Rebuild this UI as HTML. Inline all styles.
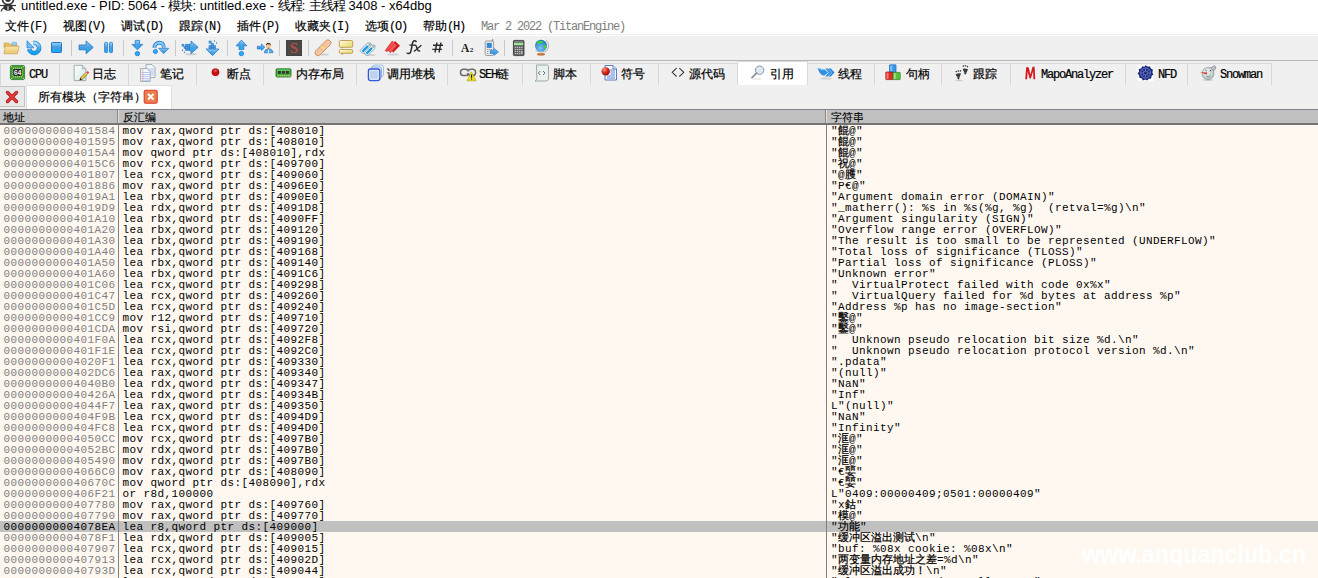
<!DOCTYPE html>
<html><head><meta charset="utf-8">
<style>
*{margin:0;padding:0;box-sizing:border-box}
html,body{width:1318px;height:578px;overflow:hidden}
body{position:relative;background:#fff;font-family:"Liberation Sans",sans-serif;color:#000}
.a{position:absolute}
svg{position:absolute;overflow:visible}
/* title */
#title b{font-weight:normal;display:inline-block;width:12px;font-size:12.5px;text-align:center}
#title{left:21px;top:-2px;font-size:13px;line-height:16px;white-space:nowrap;color:#000}
/* menu */
.mi{position:absolute;top:20px;height:14px;line-height:14px;font-family:"Liberation Mono",monospace;font-size:12px;white-space:nowrap}
.mi b{font-weight:normal;display:inline-block;width:12px;text-align:center;-webkit-text-stroke:0.2px #000}
.mi u{text-decoration:none;letter-spacing:-1.2px;-webkit-text-stroke:0.15px #000}
#ver{position:absolute;left:481px;top:20px;line-height:14px;font-family:"Liberation Mono",monospace;font-size:12px;letter-spacing:-1.2px;color:#808080;white-space:nowrap}
/* toolbar */
#tb{left:0;top:36px;width:1318px;height:24px;background:#f0f0f0}
#tbl{left:0;top:60px;width:1318px;height:1px;background:#b8b8b8}
.sep{position:absolute;top:40px;width:1px;height:16px;background:#c9c9c9}
/* tabs */
#tabbar{left:0;top:61px;width:1318px;height:48px;background:#f0f0f0}
.tab{position:absolute;top:63px;height:22px;border:1px solid #d9d9d9;border-right:none;border-bottom:none;background:#f0f0f0}
.tab.act{top:61px;height:24px;background:#fff;border-right:1px solid #d9d9d9;z-index:2}
.tt{position:absolute;top:68px;height:14px;line-height:14px;font-family:"Liberation Mono",monospace;font-size:12px;white-space:nowrap;z-index:3}
.tt b{font-weight:normal;display:inline-block;width:12px;text-align:center;-webkit-text-stroke:0.2px #000}
.tt u{text-decoration:none;letter-spacing:-1.2px;-webkit-text-stroke:0.2px #000}
/* table */
#hdr{left:0;top:109px;width:1318px;height:16px;background:#c0c0c0;border-top:1px solid #7f8590;border-bottom:2px solid #747474}
.hs{position:absolute;top:110px;width:2px;height:13px;background:#8a8a8a;border-right:1px solid #e0e0e0}
.ht{position:absolute;top:112px;line-height:12px;font-family:"Liberation Mono",monospace;font-size:11px;white-space:nowrap}
.ht b{font-weight:normal;display:inline-block;width:11px;text-align:center;-webkit-text-stroke:0.15px #000}
#data{left:0;top:125px;width:1318px;height:453px;background:#fff8f0}
.vs{position:absolute;top:125px;width:1px;height:453px;background:#808080}
.r{position:absolute;left:0;width:1318px;height:11px;line-height:11px;font-family:"Liberation Mono",monospace;font-size:11px;letter-spacing:0.4px;white-space:pre}
.r span{position:absolute;top:1px}
.r .ad{left:3.5px;color:#808080}
.r .ds{left:122.5px}
.r .st{left:831px}
.r.sel{background:#c0c0c0}
.r.sel .ad{color:#000}
.cj{font-style:normal;display:inline-block;width:11px;font-size:10.5px;letter-spacing:0;text-align:center;vertical-align:top;line-height:11px;-webkit-text-stroke:0.25px #000}
#wm{left:1082px;top:540px;transform:scaleX(0.93);transform-origin:left top;font-size:25px;line-height:28px;font-weight:bold;font-family:"Liberation Sans",sans-serif;color:#fff;white-space:nowrap;z-index:5}
</style></head><body>

<!-- title bar -->
<svg style="left:0;top:0" width="17" height="13" viewBox="0 0 17 13">
  <circle cx="8" cy="-1" r="5.6" fill="none" stroke="#333" stroke-width="1.6"/>
  <circle cx="8" cy="-1" r="3" fill="#333"/>
  <ellipse cx="8" cy="7.3" rx="4.6" ry="3.6" fill="#333"/>
  <rect x="7" y="5" width="2" height="5.5" fill="#999"/>
  <line x1="0" y1="5.5" x2="16" y2="5.5" stroke="#333" stroke-width="1.2"/>
  <path d="M4.5 8 Q1.5 8.5 1.2 11.5 M11.5 8 Q14.5 8.5 14.8 11.5" fill="none" stroke="#333" stroke-width="1.2"/>
</svg>
<div id="title" class="a">untitled.exe - PID: 5064 - <b>模</b><b>块</b>: untitled.exe - <b>线</b><b>程</b>: <b>主</b><b>线</b><b>程</b> 3408 - x64dbg</div>

<!-- menu -->
<div class="mi" style="left:5px"><b>文</b><b>件</b><u>(F)</u></div>
<div class="mi" style="left:63px"><b>视</b><b>图</b><u>(V)</u></div>
<div class="mi" style="left:121px"><b>调</b><b>试</b><u>(D)</u></div>
<div class="mi" style="left:179px"><b>跟</b><b>踪</b><u>(N)</u></div>
<div class="mi" style="left:237px"><b>插</b><b>件</b><u>(P)</u></div>
<div class="mi" style="left:295px"><b>收</b><b>藏</b><b>夹</b><u>(I)</u></div>
<div class="mi" style="left:365px"><b>选</b><b>项</b><u>(O)</u></div>
<div class="mi" style="left:423px"><b>帮</b><b>助</b><u>(H)</u></div>
<div id="ver">Mar 2 2022 (TitanEngine)</div>

<!-- toolbar -->
<div class="a" style="left:0;top:34px;width:1318px;height:1px;background:#f0f0f0"></div>
<div id="tb" class="a"></div>
<div id="tbl" class="a"></div>
<!-- folder -->
<svg style="left:3px;top:40px" width="17" height="16" viewBox="0 0 17 16">
  <defs><linearGradient id="gf" x1="0" y1="0" x2="0" y2="1"><stop offset="0" stop-color="#fbe7a6"/><stop offset="1" stop-color="#e9c66e"/></linearGradient></defs>
  <path d="M1 3 h4.5 l1.5 1.3 h7 v3 h-13z" fill="#e4bf68" stroke="#c29a4a" stroke-width="0.6"/>
  <path d="M9 2.2 h4.5 v3 h-4.5z" fill="#8fd0ee" stroke="#5aa8d0" stroke-width="0.4"/>
  <path d="M2.2 6.2 h14 l-1.8 7.6 h-13.4 z" fill="url(#gf)" stroke="#c29a4a" stroke-width="0.6"/>
</svg>
<!-- restart -->
<svg style="left:26px;top:40px" width="16" height="16" viewBox="0 0 16 16">
  <defs><linearGradient id="gr" x1="0" y1="0" x2="0" y2="1"><stop offset="0" stop-color="#a6e0ff"/><stop offset="0.5" stop-color="#4aa8ea"/><stop offset="1" stop-color="#0aa2f5"/></linearGradient></defs>
  <path d="M3.2 9 A5 5 0 1 0 7.2 3.1" fill="none" stroke="#2c86d4" stroke-width="4.6"/>
  <path d="M3.2 9 A5 5 0 1 0 7.2 3.1" fill="none" stroke="url(#gr)" stroke-width="3"/>
  <path d="M1 0.8 L1 7.8 L8 7.8z" fill="#6cc0f4" stroke="#2c86d4" stroke-width="0.8" stroke-linejoin="round"/>
</svg>
<!-- stop -->
<svg style="left:51px;top:42px" width="11" height="11" viewBox="0 0 11 11">
  <defs><linearGradient id="gs" x1="0" y1="0" x2="0" y2="1"><stop offset="0" stop-color="#94dcff"/><stop offset="0.45" stop-color="#4a9ad8"/><stop offset="1" stop-color="#0cb0ff"/></linearGradient></defs>
  <rect x="0.5" y="0.5" width="10" height="10" rx="0.8" fill="url(#gs)" stroke="#2a6fc0" stroke-width="1"/>
</svg>
<!-- run -->
<svg style="left:78px;top:40px" width="16" height="15" viewBox="0 0 16 15">
  <defs><linearGradient id="ga" x1="0" y1="0" x2="0" y2="1"><stop offset="0" stop-color="#8fd6ff"/><stop offset="0.5" stop-color="#4a9ee0"/><stop offset="1" stop-color="#14b0ff"/></linearGradient></defs>
  <path d="M1.1 5 h7 v-4 l7.1 6.4 l-7.1 6.3 v-3.9 h-7z" fill="url(#ga)" stroke="#2a78c8" stroke-width="0.9" stroke-linejoin="round"/>
</svg>
<!-- pause -->
<svg style="left:102px;top:40px" width="14" height="16" viewBox="0 0 14 16">
  <rect x="2.6" y="2.4" width="3" height="10.2" rx="0.8" fill="url(#ga)" stroke="#2a78c8" stroke-width="0.8"/>
  <rect x="7.5" y="2.4" width="3" height="10.2" rx="0.8" fill="url(#ga)" stroke="#2a78c8" stroke-width="0.8"/>
</svg>
<!-- step into -->
<svg style="left:130px;top:40px" width="16" height="17" viewBox="0 0 16 17">
  <path d="M5.3 0.4 h4.3 v4 h3.2 l-5.4 5.4 l-5.4 -5.4 h3.3z" fill="url(#ga)" stroke="#2a78c8" stroke-width="0.8" stroke-linejoin="round"/>
  <circle cx="7.4" cy="13.6" r="2.2" fill="#1eb0ff" stroke="#2a78c8" stroke-width="0.8"/>
</svg>
<!-- step over -->
<svg style="left:152px;top:40px" width="18" height="16" viewBox="0 0 18 16">
  <path d="M2.3 8 Q2.8 2.8 7.5 2.6 Q11.2 2.6 12 7.5" fill="none" stroke="#2a78c8" stroke-width="3.8"/>
  <path d="M2.3 8 Q2.8 2.8 7.5 2.6 Q11.2 2.6 12 7.5" fill="none" stroke="#7cc8f6" stroke-width="2.2"/>
  <path d="M6.6 8.3 h10.2 l-5.1 5.3z" fill="url(#ga)" stroke="#2a78c8" stroke-width="0.8" stroke-linejoin="round"/>
  <circle cx="3.4" cy="11.5" r="2.1" fill="#1eb0ff" stroke="#2a78c8" stroke-width="0.8"/>
</svg>
<!-- animate into -->
<svg style="left:181px;top:40px" width="18" height="16" viewBox="0 0 18 16">
  <ellipse cx="10" cy="14.3" rx="6" ry="1" fill="#888" opacity="0.35"/>
  <g fill="#4a9ee0" stroke="#2a78c8" stroke-width="0.5">
    <rect x="1" y="4.2" width="2" height="2"/><rect x="4.5" y="4.2" width="2" height="2"/><rect x="6.7" y="4.2" width="2" height="2"/>
    <rect x="3" y="6.4" width="2" height="2"/><rect x="4.7" y="6.4" width="2" height="2"/><rect x="6.7" y="6.4" width="2" height="2"/>
    <rect x="4.5" y="8.6" width="2" height="2"/><rect x="6.7" y="8.6" width="2" height="2"/>
  </g>
  <circle cx="1.5" cy="10.2" r="0.7" fill="#2a78c8"/><circle cx="3.5" cy="12.3" r="0.7" fill="#2a78c8"/>
  <path d="M8.5 4.3 h1.5 v-3.3 l7.1 6.3 l-7.1 6.3 v-3 h-1.5z" fill="url(#ga)" stroke="#2a78c8" stroke-width="0.8" stroke-linejoin="round"/>
</svg>
<!-- animate over -->
<svg style="left:205px;top:40px" width="16" height="17" viewBox="0 0 16 17">
  <g fill="#4a9ee0" stroke="#2a78c8" stroke-width="0.5">
    <rect x="4" y="1" width="2.2" height="2.2"/><rect x="6.2" y="3.2" width="2.2" height="2.2"/>
    <rect x="4" y="5.4" width="2.2" height="2.2"/><rect x="6.2" y="5.4" width="2.2" height="2.2"/><rect x="8.4" y="5.4" width="2.2" height="2.2"/>
    <rect x="4" y="7.4" width="2.2" height="2"/><rect x="6.2" y="7.4" width="2.2" height="2"/><rect x="8.4" y="7.4" width="2.2" height="2"/>
  </g>
  <circle cx="9.5" cy="1" r="0.7" fill="#2a78c8"/><circle cx="11.5" cy="3" r="0.7" fill="#2a78c8"/>
  <path d="M4 9 h-3 l6.6 6.6 l6.4 -6.6 h-3.4z" fill="url(#ga)" stroke="#2a78c8" stroke-width="0.8" stroke-linejoin="round"/>
</svg>
<!-- exec till return -->
<svg style="left:234px;top:40px" width="16" height="17" viewBox="0 0 16 17">
  <path d="M5.1 9.6 h4.7 v-3.8 h3.1 l-5.5 -5.7 l-5.3 5.7 h3z" fill="url(#ga)" stroke="#2a78c8" stroke-width="0.8" stroke-linejoin="round"/>
  <circle cx="7.4" cy="13.6" r="2.2" fill="#1eb0ff" stroke="#2a78c8" stroke-width="0.8"/>
</svg>
<!-- run to user code -->
<svg style="left:257px;top:40px" width="17" height="16" viewBox="0 0 17 16">
  <path d="M0.3 6.2 h4.2 v-2.2 l3.4 3.3 l-3.4 3.2 v-1.5 h-4.2z" fill="url(#ga)" stroke="#2a78c8" stroke-width="0.7" stroke-linejoin="round"/>
  <path d="M7.3 12.8 Q7.5 9 11.5 8.8 Q15.8 9 16 12.8z" fill="#5aaae8" stroke="#2a78c8" stroke-width="0.7"/>
  <rect x="11" y="9" width="1" height="3.8" fill="#fff"/>
  <circle cx="11.4" cy="5.8" r="2.5" fill="#f2c290"/>
  <path d="M8.8 5.6 Q9 2.8 11.4 2.8 Q13.8 2.8 14 5.6 Q13 4 11.4 4.2 Q9.8 4 8.8 5.6z" fill="#4a3426"/>
  <rect x="10.7" y="7.8" width="1.4" height="1.8" fill="#b86a2a"/>
</svg>
<!-- S -->
<svg style="left:286px;top:40px" width="16" height="16" viewBox="0 0 16 16">
  <rect x="0.4" y="0.4" width="15.2" height="15.2" fill="#4a4745" stroke="#333" stroke-width="0.8"/>
  <text x="8" y="13.4" font-family="Liberation Serif" font-weight="bold" font-size="15" fill="#b04c4c" text-anchor="middle">S</text>
</svg>
<!-- bandage -->
<svg style="left:314px;top:40px" width="17" height="16" viewBox="0 0 17 16">
  <ellipse cx="10" cy="14.5" rx="5" ry="1" fill="#888" opacity="0.3"/>
  <g transform="rotate(-45 9 7.8)"><rect x="-1" y="4.8" width="20" height="6" rx="3" fill="#f2c4a0" stroke="#c8885a" stroke-width="0.8"/><rect x="7" y="5.5" width="4" height="4.6" fill="#f7d890" stroke="#e09a70" stroke-width="0.5"/></g>
</svg>
<!-- comments -->
<svg style="left:338px;top:40px" width="16" height="16" viewBox="0 0 16 16">
  <defs><linearGradient id="gc" x1="0" y1="0" x2="1" y2="1"><stop offset="0" stop-color="#fffdf0"/><stop offset="0.6" stop-color="#ece68e"/><stop offset="1" stop-color="#e4dc78"/></linearGradient></defs>
  <rect x="1.3" y="0.5" width="13.4" height="6.8" rx="1.2" fill="url(#gc)" stroke="#bf9450" stroke-width="0.9"/>
  <path d="M3.8 7.2 v1.8 l1.8 -1.8z" fill="#bf9450"/>
  <rect x="1.3" y="9.5" width="13.4" height="3.8" rx="1.2" fill="url(#gc)" stroke="#bf9450" stroke-width="0.9"/>
  <path d="M3.8 13.2 v2.4 l1.8 -2.4z" fill="#bf9450"/>
</svg>
<!-- labels -->
<svg style="left:361px;top:40px" width="17" height="16" viewBox="0 0 17 16">
  <ellipse cx="9" cy="15" rx="6" ry="0.9" fill="#888" opacity="0.3"/>
  <g transform="rotate(-45 6 7)"><path d="M-1.5 4.6 h10.5 l2.5 2.4 l-2.5 2.4 h-10.5z" fill="#fff" stroke="#7d9aa0" stroke-width="0.8"/><rect x="-0.5" y="5.8" width="8" height="2.4" fill="#1e9be6"/><circle cx="9" cy="7" r="0.9" fill="#7d9aa0"/></g>
  <g transform="rotate(-45 10 9)"><path d="M2.5 6.6 h10.5 l2.5 2.4 l-2.5 2.4 h-10.5z" fill="#fff" stroke="#7d9aa0" stroke-width="0.8"/><rect x="3.5" y="7.8" width="8" height="2.4" fill="#1e9be6"/><circle cx="13" cy="9" r="0.9" fill="#7d9aa0"/></g>
</svg>
<!-- bookmarks -->
<svg style="left:384px;top:40px" width="17" height="16" viewBox="0 0 17 16">
  <ellipse cx="9" cy="14.5" rx="6" ry="0.9" fill="#888" opacity="0.3"/>
  <path d="M11 1 L16 5.8 L9 12.8 L7.8 10.5 L5 11.5 L4 10.5z" fill="#d81c1c"/>
  <path d="M8.2 1 L13.2 5.8 L6.2 12.8 L5 10.5 L2.2 11.5 L1.2 10.5z" fill="#f04a4a" stroke="#c81818" stroke-width="0.5"/>
  <path d="M9 2.8 L11.5 5.3 L5.5 11.2" stroke="#ff8a8a" stroke-width="0.6" fill="none"/>
</svg>
<!-- fx -->
<svg style="left:404px;top:38px" width="20" height="18" viewBox="0 0 20 18">
  <path d="M12.3 4.2 Q12 2.7 10.6 2.8 Q8.9 2.9 8.4 5.6 L7 12.8 Q6.4 15.6 4.2 15.6 Q3 15.5 3.1 14.6" stroke="#2a2a2a" stroke-width="1.5" fill="none"/>
  <path d="M5.3 7.1 H10.2" stroke="#2a2a2a" stroke-width="1.2"/>
  <path d="M9.8 7.4 Q11.6 6.4 12.4 8.6 L13.6 11.8 Q14.3 13.6 16.2 12.6" stroke="#2a2a2a" stroke-width="1.4" fill="none"/>
  <path d="M17.4 7.2 L10 13.4" stroke="#2a2a2a" stroke-width="1.3" fill="none"/>
</svg>
<!-- # -->
<svg style="left:432px;top:42px" width="12" height="11" viewBox="0 0 12 11">
  <path d="M5 0.5 L3 10.5 M9 0.5 L7 10.5 M1 3.3 H11 M0.3 7.4 H10" stroke="#2a2a2a" stroke-width="1.4"/>
</svg>
<!-- A2 -->
<div class="a" style="left:461px;top:42px;font-family:'Liberation Serif',serif;font-weight:bold;font-size:11.5px;line-height:12px;color:#222">A<span style="font-size:7px;margin-left:0.5px">2</span></div>
<!-- phone -->
<svg style="left:484px;top:39px" width="15" height="17" viewBox="0 0 15 17">
  <line x1="8.6" y1="0.3" x2="8.6" y2="3" stroke="#555" stroke-width="0.9"/>
  <rect x="1.2" y="2" width="8.5" height="14.5" rx="1.2" fill="#e8e8e8" stroke="#8a8a8a" stroke-width="0.8"/>
  <rect x="2.8" y="3.9" width="5" height="5" fill="#2f8ad8"/>
  <g fill="#777"><rect x="3.3" y="10" width="0.9" height="0.9"/><rect x="5.2" y="10" width="0.9" height="0.9"/><rect x="7.2" y="10" width="0.9" height="0.9"/>
  <rect x="3.3" y="12" width="0.9" height="0.9"/><rect x="3.3" y="14" width="0.9" height="0.9"/></g>
  <path d="M6.3 11.3 h3.8 v-1.8 l4.3 3.4 l-4.3 3.4 v-1.8 h-3.8z" fill="url(#ga)" stroke="#2a78c8" stroke-width="0.7" stroke-linejoin="round"/>
</svg>
<!-- calculator -->
<svg style="left:513px;top:40px" width="12" height="16" viewBox="0 0 12 16">
  <rect x="0.4" y="0.4" width="10.6" height="15.2" rx="0.8" fill="#5a5a5a" stroke="#333" stroke-width="0.8"/>
  <rect x="1.2" y="1.2" width="9" height="1" fill="#8a8a8a"/>
  <rect x="1" y="2.8" width="9.2" height="2.4" fill="#9ee69a"/>
  <g fill="#c8c8c8"><rect x="1.8" y="6.7" width="1.4" height="1.2"/><rect x="3.9" y="6.7" width="1.4" height="1.2"/><rect x="6" y="6.7" width="1.4" height="1.2"/><rect x="8.1" y="6.7" width="1.4" height="1.2"/>
  <rect x="1.8" y="8.8" width="1.4" height="1.2"/><rect x="3.9" y="8.8" width="1.4" height="1.2"/><rect x="6" y="8.8" width="1.4" height="1.2"/><rect x="8.1" y="8.8" width="1.4" height="1.2"/>
  <rect x="1.8" y="10.9" width="1.4" height="1.2"/><rect x="3.9" y="10.9" width="1.4" height="1.2"/><rect x="6" y="10.9" width="1.4" height="1.2"/><rect x="8.1" y="10.9" width="1.4" height="3.3"/>
  <rect x="1.8" y="13" width="1.4" height="1.2"/><rect x="3.9" y="13" width="1.4" height="1.2"/><rect x="6" y="13" width="1.4" height="1.2"/></g>
</svg>
<!-- globe -->
<svg style="left:534px;top:39px" width="16" height="17" viewBox="0 0 16 17">
  <defs><radialGradient id="gg" cx="0.45" cy="0.7" r="0.7"><stop offset="0" stop-color="#7cc4f8"/><stop offset="1" stop-color="#1a6ec8"/></radialGradient></defs>
  <path d="M12.4 1.3 Q16.5 6 13 11.5 Q9 14.5 1.5 11.5" fill="none" stroke="#a8a8a8" stroke-width="0.9"/>
  <circle cx="7" cy="6.7" r="6" fill="url(#gg)"/>
  <path d="M3 2.8 Q6.5 1 9.5 2.5 Q8.5 4.5 6.8 4.3 Q5.5 5.5 4.2 4.8 Q2.5 5 3 2.8z M9.3 5.5 Q12.5 5 12.2 8.5 Q11 10.5 9.6 9.2 Q10.2 7.5 9.3 5.5z M1.5 6 Q3 6.5 2.8 8 Q1.6 8 1.5 6z" fill="#3ed23a"/>
  <ellipse cx="7" cy="15.2" rx="4" ry="1.3" fill="#b8652a"/>
  <ellipse cx="7" cy="14.8" rx="3" ry="0.6" fill="#e09a5a"/>
</svg>
<div class="sep" style="left:71px"></div>
<div class="sep" style="left:123px"></div>
<div class="sep" style="left:175px"></div>
<div class="sep" style="left:227px"></div>
<div class="sep" style="left:279px"></div>
<div class="sep" style="left:308px"></div>
<div class="sep" style="left:452px"></div>
<div class="sep" style="left:504px"></div>


<!-- tabs -->
<div id="tabbar" class="a"></div>
<div class="tab" style="left:0px;width:59px"></div>
<div class="tab" style="left:59px;width:69px"></div>
<div class="tab" style="left:128px;width:68px"></div>
<div class="tab" style="left:196px;width:67px"></div>
<div class="tab" style="left:263px;width:93px"></div>
<div class="tab" style="left:356px;width:91px"></div>
<div class="tab" style="left:447px;width:75px"></div>
<div class="tab" style="left:522px;width:68px"></div>
<div class="tab" style="left:590px;width:68px"></div>
<div class="tab" style="left:658px;width:79px"></div>
<div class="tab act" style="left:737px;width:71px"></div>
<div class="tab" style="left:807px;width:67px"></div>
<div class="tab" style="left:874px;width:67px"></div>
<div class="tab" style="left:941px;width:69px"></div>
<div class="tab" style="left:1010px;width:115px"></div>
<div class="tab" style="left:1125px;width:62px"></div>
<div class="tab" style="left:1187px;width:85px;border-right:1px solid #d9d9d9"></div>

<!-- CPU chip -->
<svg style="left:10px;top:65px;z-index:3" width="15" height="15" viewBox="0 0 15 15">
  <rect x="0.4" y="0.4" width="14.2" height="14.2" rx="1.6" fill="#3c9e3a" stroke="#1e6a1e" stroke-width="0.7"/>
  <g fill="#efd77a"><circle cx="1.6" cy="1.6" r="0.6"/><circle cx="13.4" cy="1.6" r="0.6"/><circle cx="1.6" cy="13.4" r="0.6"/><circle cx="13.4" cy="13.4" r="0.6"/></g>
  <g stroke="#efd77a" stroke-width="0.7">
    <path d="M3.7 2.4 v1.8 M5.7 2.4 v1.8 M7.5 2.4 v1.8 M9.3 2.4 v1.8 M11.3 2.4 v1.8"/>
    <path d="M3.7 10.8 v1.8 M5.7 10.8 v1.8 M7.5 10.8 v1.8 M9.3 10.8 v1.8 M11.3 10.8 v1.8"/>
    <path d="M2.3 5 h1.8 M2.3 6.8 h1.8 M2.3 8.6 h1.8 M2.3 10.3 h1.8"/>
    <path d="M10.9 5 h1.8 M10.9 6.8 h1.8 M10.9 8.6 h1.8 M10.9 10.3 h1.8"/>
  </g>
  <rect x="3.2" y="4.1" width="8.6" height="6.6" rx="0.8" fill="#262626"/>
  <text x="7.5" y="9.9" font-family="Liberation Mono" font-weight="bold" font-size="6.6" fill="#f4f4f4" text-anchor="middle" letter-spacing="-0.3">64</text>
</svg>
<div class="tt" style="left:29px"><u>CPU</u></div>
<!-- log page w/ pencil -->
<svg style="left:72px;top:64px;z-index:3" width="18" height="18" viewBox="0 0 18 18">
  <defs><linearGradient id="gpg" x1="0" y1="0" x2="1" y2="1"><stop offset="0" stop-color="#ffffff"/><stop offset="1" stop-color="#d4e4e4"/></linearGradient></defs>
  <path d="M2.1 1.3 h8.3 l3.5 3.5 v11.8 h-11.8z" fill="url(#gpg)" stroke="#94a8a8" stroke-width="0.9"/>
  <path d="M10.4 1.3 v3.5 h3.5" fill="#c8d8d8" stroke="#94a8a8" stroke-width="0.7"/>
  <path d="M9.2 14.8 L14.6 9.4" stroke="#6a5a1a" stroke-width="2.8" stroke-linecap="butt"/>
  <path d="M9.2 14.8 L14.6 9.4" stroke="#f0d040" stroke-width="1.8" stroke-linecap="butt"/>
  <path d="M7.4 16.6 L8.2 13.8 L10.2 15.8z" fill="#222"/>
  <path d="M14.2 8.6 L15.8 7 L17.2 8.4 L15.6 10z" fill="#e83a3a"/>
  <path d="M13.8 9 L15.2 10.4" stroke="#ddd" stroke-width="0.8"/>
</svg>
<div class="tt" style="left:92px"><b>日</b><b>志</b></div>
<!-- notes -->
<svg style="left:140px;top:64px;z-index:3" width="16" height="18" viewBox="0 0 16 18">
  <path d="M6 0.6 h6 l3 3 v10 h-9z" fill="#f4f6fb" stroke="#8e9aa6" stroke-width="0.8"/>
  <g stroke="#9fb2e6" stroke-width="0.7"><line x1="7" y1="5" x2="14" y2="5"/><line x1="7" y1="7" x2="14" y2="7"/><line x1="7" y1="9" x2="14" y2="9"/><line x1="7" y1="11" x2="14" y2="11"/></g>
  <path d="M0.6 4.6 h6.5 l3 3 v9.8 h-9.5z" fill="#f8f9fd" stroke="#8e9aa6" stroke-width="0.8"/>
  <g stroke="#9fb2e6" stroke-width="0.7"><line x1="1.5" y1="8.5" x2="9.5" y2="8.5"/><line x1="1.5" y1="10.5" x2="9.5" y2="10.5"/><line x1="1.5" y1="12.5" x2="9.5" y2="12.5"/><line x1="1.5" y1="14.5" x2="9.5" y2="14.5"/><line x1="1.5" y1="16.3" x2="9.5" y2="16.3"/></g>
  <line x1="2.8" y1="5.2" x2="2.8" y2="17" stroke="#e49a9a" stroke-width="0.7"/>
</svg>
<div class="tt" style="left:160px"><b>笔</b><b>记</b></div>
<!-- breakpoint dot -->
<svg style="left:210px;top:66px;z-index:3" width="11" height="11" viewBox="0 0 11 11">
  <defs><radialGradient id="rd" cx="0.5" cy="0.3" r="0.7"><stop offset="0" stop-color="#f06060"/><stop offset="0.5" stop-color="#b80c0c"/><stop offset="1" stop-color="#e01414"/></radialGradient></defs>
  <circle cx="5.5" cy="6.2" r="3.7" fill="url(#rd)" stroke="#a01010" stroke-width="0.4"/>
</svg>
<div class="tt" style="left:227px"><b>断</b><b>点</b></div>
<!-- memory map -->
<svg style="left:275px;top:68px;z-index:3" width="17" height="10" viewBox="0 0 17 10">
  <rect x="1" y="0.8" width="15" height="8.2" rx="1" fill="#3eac3a" stroke="#1d6e1d" stroke-width="0.8"/>
  <rect x="2" y="1.6" width="13" height="1" fill="#7ad27a"/>
  <g fill="#3a2c3a"><rect x="3.1" y="3" width="2.7" height="2.8"/><rect x="7.1" y="3" width="2.7" height="2.8"/><rect x="11.1" y="3" width="2.7" height="2.8"/></g>
  <g fill="#ecd27a"><rect x="2.7" y="6.9" width="1" height="1.6"/><rect x="4.7" y="6.9" width="1" height="1.6"/><rect x="6.7" y="6.9" width="1" height="1.6"/><rect x="8.7" y="6.9" width="1" height="1.6"/><rect x="10.7" y="6.9" width="1" height="1.6"/><rect x="12.7" y="6.9" width="1" height="1.6"/><rect x="14.5" y="6.9" width="1" height="1.6"/></g>
</svg>
<div class="tt" style="left:296px"><b>内</b><b>存</b><b>布</b><b>局</b></div>
<!-- call stack -->
<svg style="left:367px;top:64px;z-index:3" width="18" height="18" viewBox="0 0 18 18">
  <rect x="5.5" y="1" width="11" height="11.5" rx="2" fill="#e4eef8" stroke="#9dbbe4" stroke-width="0.9"/>
  <rect x="3.5" y="3" width="11" height="11.5" rx="2" fill="#dfeaf7" stroke="#8aaee0" stroke-width="0.9"/>
  <rect x="1.4" y="5" width="11.4" height="11.6" rx="2" fill="#dbe7f5" stroke="#3558d6" stroke-width="1.3"/>
  <rect x="3.3" y="7" width="7.6" height="7.6" rx="1" fill="#bcd2ee"/>
</svg>
<div class="tt" style="left:387px"><b>调</b><b>用</b><b>堆</b><b>栈</b></div>
<!-- SEH chain -->
<svg style="left:459px;top:66px;z-index:3" width="18" height="16" viewBox="0 0 18 16">
  <rect x="1.5" y="3.2" width="8" height="6.3" rx="3.1" fill="none" stroke="#6e6e6e" stroke-width="1.6"/>
  <rect x="9" y="3.2" width="7.6" height="6.3" rx="3.1" fill="none" stroke="#6e6e6e" stroke-width="1.6"/>
  <rect x="3.5" y="5.6" width="9" height="1.5" rx="0.7" fill="#e8e8e8"/>
  <path d="M12.5 5.8 L17 14.8 H8 z" fill="#ecdf1e" stroke="#a89a00" stroke-width="0.6" stroke-linejoin="round"/>
  <rect x="12" y="8.4" width="1.1" height="3.4" rx="0.5" fill="#111"/>
  <circle cx="12.55" cy="13.1" r="0.65" fill="#111"/>
</svg>
<div class="tt" style="left:479px"><u>SEH</u><b>链</b></div>
<!-- script -->
<svg style="left:533px;top:64px;z-index:3" width="17" height="18" viewBox="0 0 17 18">
  <path d="M3.5 1 h10.5 q1.5 0 1.5 1.5 v12.5 q-0.5 2 -2.5 2 h-11 q1.8 -0.8 1.8 -2.5z" fill="#eaf0ee" stroke="#8fa4a0" stroke-width="0.9"/>
  <path d="M7.3 7 L5.3 9 L7.3 11 M10 7 L12 9 L10 11" fill="none" stroke="#5a6a70" stroke-width="0.9"/>
</svg>
<div class="tt" style="left:553px"><b>脚</b><b>本</b></div>
<!-- symbols -->
<svg style="left:601px;top:64px;z-index:3" width="17" height="17" viewBox="0 0 17 17">
  <path d="M4 1.5 h8 l3.5 3.5 v11 h-11.5z" fill="#f6f8fc" stroke="#5a7cc0" stroke-width="1"/>
  <path d="M12 1.5 v3.5 h3.5" fill="#dfe6f4" stroke="#3a5aa8" stroke-width="0.7"/>
  <g stroke="#3a6ad0" stroke-width="0.8"><line x1="9" y1="6" x2="14" y2="6"/><line x1="9.5" y1="8" x2="14" y2="8"/><line x1="9.5" y1="10" x2="14" y2="10"/><line x1="6" y1="12" x2="14" y2="12"/><line x1="6" y1="14" x2="14" y2="14"/></g>
  <defs><radialGradient id="gsy" cx="0.35" cy="0.3" r="0.75"><stop offset="0" stop-color="#ff9a8a"/><stop offset="0.5" stop-color="#d82a1a"/><stop offset="1" stop-color="#8a1010"/></radialGradient></defs>
  <circle cx="4.7" cy="7.4" r="4.2" fill="url(#gsy)"/>
</svg>
<div class="tt" style="left:621px"><b>符</b><b>号</b></div>
<!-- source -->
<svg style="left:670px;top:66px;z-index:3" width="16" height="12" viewBox="0 0 16 12">
  <path d="M6.6 2.1 L2.2 6.3 L6.6 10.5 M9.3 2.1 L13.8 6.3 L9.3 10.5" fill="none" stroke="#3a3a3a" stroke-width="1.05"/>
</svg>
<div class="tt" style="left:689px"><b>源</b><b>代</b><b>码</b></div>
<!-- references (magnifier) -->
<svg style="left:751px;top:65px;z-index:3" width="14" height="15" viewBox="0 0 14 15">
  <circle cx="8.6" cy="5.2" r="4.2" fill="#dde9f5" stroke="#8a96a6" stroke-width="1"/>
  <line x1="5.6" y1="8.2" x2="1" y2="12.6" stroke="#8a8f96" stroke-width="1.8" stroke-linecap="round"/>
  <ellipse cx="6" cy="14" rx="5" ry="0.8" fill="#ccc" opacity="0.5"/>
</svg>
<div class="tt" style="left:770px"><b>引</b><b>用</b></div>
<!-- threads -->
<svg style="left:817px;top:65px;z-index:3" width="18" height="15" viewBox="0 0 18 15">
  <ellipse cx="9" cy="13.5" rx="6" ry="0.9" fill="#999" opacity="0.35"/>
  <path d="M0.5 3 Q3 2.5 5.5 4.5 L7.5 4.5 L11 7.5 L7.5 10.5 L6 10.5 Q3 10 0.5 3z" fill="#2f8fe0"/>
  <path d="M0.8 3.2 Q3.5 3.5 5.3 5.5" stroke="#a8dcff" stroke-width="0.8" fill="none"/>
  <path d="M8 3.5 L11.2 3.5 L15 7.5 L11.2 11.5 L8 11.5 L11.6 7.5z" fill="#3a9ae8"/>
  <path d="M11.5 3.5 L13.8 3.5 L17.5 7.5 L13.8 11.5 L11.5 11.5 L15.2 7.5z" fill="#2a86d8"/>
</svg>
<div class="tt" style="left:838px"><b>线</b><b>程</b></div>
<!-- handles -->
<svg style="left:885px;top:64px;z-index:3" width="17" height="17" viewBox="0 0 17 17">
  <rect x="4.5" y="0.8" width="6.5" height="7.5" rx="0.5" fill="#3a9ae8" stroke="#1a64b8" stroke-width="0.7"/>
  <rect x="5.2" y="1.5" width="2" height="6" fill="#7cc4f8"/>
  <rect x="0.8" y="8" width="7.2" height="7.6" rx="0.5" fill="#e02a2a" stroke="#9a1414" stroke-width="0.7"/>
  <rect x="8" y="8.4" width="7.2" height="7.2" rx="0.5" fill="#5cc23a" stroke="#2a7a14" stroke-width="0.7"/>
  <rect x="1.5" y="8.7" width="2" height="6.2" fill="#ff7a6a"/>
  <rect x="8.7" y="9" width="2" height="6" fill="#9ae27a"/>
</svg>
<div class="tt" style="left:906px"><b>句</b><b>柄</b></div>
<!-- trace (footprints) -->
<svg style="left:954px;top:64px;z-index:3" width="16" height="18" viewBox="0 0 16 18">
  <ellipse cx="5" cy="16.5" rx="4" ry="0.8" fill="#999" opacity="0.4"/>
  <g fill="#3a3a3a">
    <circle cx="2.3" cy="7.6" r="0.8"/><circle cx="4.3" cy="7.1" r="0.8"/><circle cx="6.4" cy="6.9" r="0.8"/>
    <path d="M1.6 10.4 Q4.5 8.6 7.1 9.6 Q6.6 11 5.7 12.6 Q5.6 15.6 4.2 15.4 Q3.2 15.2 3.4 13 Q2 11.8 1.6 10.4z"/>
    <circle cx="9.3" cy="2.1" r="0.8"/><circle cx="11.4" cy="1.8" r="0.8"/><circle cx="13.4" cy="2.6" r="0.8"/>
    <path d="M8.7 4.8 Q11.6 3.8 14.1 5.6 Q13.4 7 12.6 8.2 Q12.3 10.6 11 10.4 Q10 10.2 10.3 8.2 Q9 6.5 8.7 4.8z"/>
  </g>
</svg>
<div class="tt" style="left:973px"><b>跟</b><b>踪</b></div>
<!-- Mapo M -->
<svg style="left:1024px;top:66px;z-index:3" width="12" height="14" viewBox="0 0 12 14">
  <path d="M1.2 13.2 L2.2 1.3 H4.6 L6.4 8.4 L8.6 0.8 H10.6 L11.2 13.2 H9.4 L9.1 5.2 L6.9 12.4 H5.6 L3.7 5.6 L3.1 13.2z" fill="#d81818"/>
</svg>
<div class="tt" style="left:1041px"><u>MapoAnalyzer</u></div>
<!-- NFD -->
<svg style="left:1137px;top:65px;z-index:3" width="17" height="16" viewBox="0 0 17 16">
  <rect x="0.5" y="0" width="16" height="16" fill="#fff"/>
  <path d="M8.5 0.3 L10.6 1.6 L13 1.4 L13.9 3.6 L16 4.8 L15.4 7.2 L16.3 9.4 L14.5 11 L14.2 13.4 L11.8 13.7 L10.2 15.6 L8.2 14.5 L5.9 15.4 L4.6 13.3 L2.2 12.8 L2.2 10.4 L0.6 8.5 L2 6.5 L1.8 4.1 L4.1 3.4 L5.2 1.2 L7.4 1.8z" fill="#1a2a82"/>
  <circle cx="8.5" cy="8" r="5" fill="none" stroke="#8a96cc" stroke-width="0.7"/>
  <g stroke="#8a96cc" stroke-width="0.7"><line x1="8.5" y1="3.5" x2="8.5" y2="12.5"/><line x1="4" y1="8" x2="13" y2="8"/><line x1="5.3" y1="4.8" x2="11.7" y2="11.2"/><line x1="11.7" y1="4.8" x2="5.3" y2="11.2"/></g>
  <circle cx="8.5" cy="8" r="2" fill="#1a2a82" stroke="#8a96cc" stroke-width="0.6"/>
</svg>
<div class="tt" style="left:1158px"><u>NFD</u></div>
<!-- Snowman -->
<svg style="left:1200px;top:65px;z-index:3" width="17" height="16" viewBox="0 0 17 16">
  <defs><radialGradient id="gsn" cx="0.4" cy="0.35" r="0.75"><stop offset="0" stop-color="#f4f8f8"/><stop offset="1" stop-color="#a9baba"/></radialGradient></defs>
  <ellipse cx="8" cy="15" rx="5" ry="0.9" fill="#999" opacity="0.4"/>
  <path d="M9.5 3.5 L14.5 0.6 Q16.5 1.5 15.6 4 L12.5 7z" fill="#b8bcc8" stroke="#7a7e8a" stroke-width="0.6"/>
  <circle cx="8" cy="8.5" r="6" fill="url(#gsn)" stroke="#7a8a8a" stroke-width="0.6"/>
  <path d="M5.5 5.2 l1.2 0.8 M9.8 6 l1.3 -0.6" stroke="#333" stroke-width="1"/>
  <path d="M0.2 7.2 L7.5 7.6 L6.5 9.6z" fill="#e02a1a"/>
  <path d="M6.5 11.5 Q9 12.5 10.5 10.8" fill="none" stroke="#6a7a7a" stroke-width="0.7"/>
</svg>
<div class="tt" style="left:1220px"><u>Snowman</u></div>

<!-- sub tab bar -->
<div class="a" style="left:0;top:86px;width:25px;height:21px;background:#e8e8e8;border:1px solid #c4c4c4;border-left:none"></div>
<svg style="left:5px;top:90px" width="14" height="14" viewBox="0 0 14 14">
  <path d="M2.5 2.5 L11.5 11.5 M11.5 2.5 L2.5 11.5" stroke="#a81818" stroke-width="3.4" stroke-linecap="round"/>
  <path d="M2.5 2.5 L11.5 11.5 M11.5 2.5 L2.5 11.5" stroke="#e03a3a" stroke-width="2" stroke-linecap="round"/>
</svg>
<div class="a" style="left:26px;top:85px;width:146px;height:24px;background:#fff;border:1px solid #e0e0e0;border-bottom:none"></div>
<div class="tt" style="left:38px;top:91px;font-size:12px;line-height:14px"><b>所</b><b>有</b><b>模</b><b>块</b><b>（</b><b>字</b><b>符</b><b>串</b><b>）</b></div>
<svg style="left:143px;top:89px;z-index:3" width="16" height="16" viewBox="0 0 16 16">
  <rect x="1.2" y="1.2" width="13" height="13" rx="1.5" fill="#e8804e" stroke="#e0382a" stroke-width="1.1"/>
  <path d="M5 5 L10.5 10.5 M10.5 5 L5 10.5" stroke="#fff" stroke-width="1.9"/>
</svg>


<!-- table -->
<div id="hdr" class="a"></div>
<div class="hs" style="left:117px"></div>
<div class="hs" style="left:825px"></div>
<div class="ht" style="left:3px"><b>地</b><b>址</b></div>
<div class="ht" style="left:123px"><b>反</b><b>汇</b><b>编</b></div>
<div class="ht" style="left:831px"><b>字</b><b>符</b><b>串</b></div>
<div id="data" class="a"></div>
<div class="r" style="top:125px"><span class="ad">0000000000401584</span><span class="ds">mov rax,qword ptr ds:[408010]</span><span class="st">"<i class="cj">餛</i>@"</span></div>
<div class="r" style="top:136px"><span class="ad">0000000000401595</span><span class="ds">mov rax,qword ptr ds:[408010]</span><span class="st">"<i class="cj">餛</i>@"</span></div>
<div class="r" style="top:147px"><span class="ad">00000000004015A4</span><span class="ds">mov qword ptr ds:[408010],rdx</span><span class="st">"<i class="cj">餛</i>@"</span></div>
<div class="r" style="top:158px"><span class="ad">00000000004015C6</span><span class="ds">mov rcx,qword ptr ds:[409700]</span><span class="st">"<i class="cj">祝</i>@"</span></div>
<div class="r" style="top:169px"><span class="ad">0000000000401807</span><span class="ds">lea rcx,qword ptr ds:[409060]</span><span class="st">"@<i class="cj">臒</i>"</span></div>
<div class="r" style="top:180px"><span class="ad">0000000000401886</span><span class="ds">mov rax,qword ptr ds:[4096E0]</span><span class="st">"P€@"</span></div>
<div class="r" style="top:191px"><span class="ad">00000000004019A1</span><span class="ds">lea rbx,qword ptr ds:[4090E0]</span><span class="st">"Argument domain error (DOMAIN)"</span></div>
<div class="r" style="top:202px"><span class="ad">00000000004019D9</span><span class="ds">lea rdx,qword ptr ds:[4091D8]</span><span class="st">"_matherr(): %s in %s(%g, %g)  (retval=%g)\n"</span></div>
<div class="r" style="top:213px"><span class="ad">0000000000401A10</span><span class="ds">lea rbx,qword ptr ds:[4090FF]</span><span class="st">"Argument singularity (SIGN)"</span></div>
<div class="r" style="top:224px"><span class="ad">0000000000401A20</span><span class="ds">lea rbx,qword ptr ds:[409120]</span><span class="st">"Overflow range error (OVERFLOW)"</span></div>
<div class="r" style="top:235px"><span class="ad">0000000000401A30</span><span class="ds">lea rbx,qword ptr ds:[409190]</span><span class="st">"The result is too small to be represented (UNDERFLOW)"</span></div>
<div class="r" style="top:246px"><span class="ad">0000000000401A40</span><span class="ds">lea rbx,qword ptr ds:[409168]</span><span class="st">"Total loss of significance (TLOSS)"</span></div>
<div class="r" style="top:257px"><span class="ad">0000000000401A50</span><span class="ds">lea rbx,qword ptr ds:[409140]</span><span class="st">"Partial loss of significance (PLOSS)"</span></div>
<div class="r" style="top:268px"><span class="ad">0000000000401A60</span><span class="ds">lea rbx,qword ptr ds:[4091C6]</span><span class="st">"Unknown error"</span></div>
<div class="r" style="top:279px"><span class="ad">0000000000401C06</span><span class="ds">lea rcx,qword ptr ds:[409298]</span><span class="st">"  VirtualProtect failed with code 0x%x"</span></div>
<div class="r" style="top:290px"><span class="ad">0000000000401C47</span><span class="ds">lea rcx,qword ptr ds:[409260]</span><span class="st">"  VirtualQuery failed for %d bytes at address %p"</span></div>
<div class="r" style="top:301px"><span class="ad">0000000000401C5D</span><span class="ds">lea rcx,qword ptr ds:[409240]</span><span class="st">"Address %p has no image-section"</span></div>
<div class="r" style="top:312px"><span class="ad">0000000000401CC9</span><span class="ds">mov r12,qword ptr ds:[409710]</span><span class="st">"<i class="cj">鑿</i>@"</span></div>
<div class="r" style="top:323px"><span class="ad">0000000000401CDA</span><span class="ds">mov rsi,qword ptr ds:[409720]</span><span class="st">"<i class="cj">鑿</i>@"</span></div>
<div class="r" style="top:334px"><span class="ad">0000000000401F0A</span><span class="ds">lea rcx,qword ptr ds:[4092F8]</span><span class="st">"  Unknown pseudo relocation bit size %d.\n"</span></div>
<div class="r" style="top:345px"><span class="ad">0000000000401F1E</span><span class="ds">lea rcx,qword ptr ds:[4092C0]</span><span class="st">"  Unknown pseudo relocation protocol version %d.\n"</span></div>
<div class="r" style="top:356px"><span class="ad">00000000004020F1</span><span class="ds">lea rcx,qword ptr ds:[409330]</span><span class="st">".pdata"</span></div>
<div class="r" style="top:367px"><span class="ad">0000000000402DC6</span><span class="ds">lea rax,qword ptr ds:[409340]</span><span class="st">"(null)"</span></div>
<div class="r" style="top:378px"><span class="ad">00000000004040B0</span><span class="ds">lea rdx,qword ptr ds:[409347]</span><span class="st">"NaN"</span></div>
<div class="r" style="top:389px"><span class="ad">000000000040426A</span><span class="ds">lea rdx,qword ptr ds:[40934B]</span><span class="st">"Inf"</span></div>
<div class="r" style="top:400px"><span class="ad">00000000004044F7</span><span class="ds">lea rax,qword ptr ds:[409350]</span><span class="st">L"(null)"</span></div>
<div class="r" style="top:411px"><span class="ad">0000000000404F9B</span><span class="ds">lea rcx,qword ptr ds:[4094D9]</span><span class="st">"NaN"</span></div>
<div class="r" style="top:422px"><span class="ad">0000000000404FC8</span><span class="ds">lea rcx,qword ptr ds:[4094D0]</span><span class="st">"Infinity"</span></div>
<div class="r" style="top:433px"><span class="ad">00000000004050CC</span><span class="ds">mov rcx,qword ptr ds:[4097B0]</span><span class="st">"<i class="cj">洭</i>@"</span></div>
<div class="r" style="top:444px"><span class="ad">00000000004052BC</span><span class="ds">mov rdx,qword ptr ds:[4097B0]</span><span class="st">"<i class="cj">洭</i>@"</span></div>
<div class="r" style="top:455px"><span class="ad">0000000000405490</span><span class="ds">mov rdx,qword ptr ds:[4097B0]</span><span class="st">"<i class="cj">洭</i>@"</span></div>
<div class="r" style="top:466px"><span class="ad">00000000004066C0</span><span class="ds">mov rax,qword ptr ds:[408090]</span><span class="st">"€<i class="cj">婯</i>"</span></div>
<div class="r" style="top:477px"><span class="ad">000000000040670C</span><span class="ds">mov qword ptr ds:[408090],rdx</span><span class="st">"€<i class="cj">婯</i>"</span></div>
<div class="r" style="top:488px"><span class="ad">0000000000406F21</span><span class="ds">or r8d,100000</span><span class="st">L"0409:00000409;0501:00000409"</span></div>
<div class="r" style="top:499px"><span class="ad">0000000000407780</span><span class="ds">mov rax,qword ptr ds:[409760]</span><span class="st">"x<i class="cj">鈷</i>"</span></div>
<div class="r" style="top:510px"><span class="ad">0000000000407790</span><span class="ds">mov rax,qword ptr ds:[409770]</span><span class="st">"<i class="cj">模</i>@"</span></div>
<div class="r sel" style="top:521px"><span class="ad">00000000004078EA</span><span class="ds">lea r8,qword ptr ds:[409000]</span><span class="st">"<i class="cj">功</i><i class="cj">能</i>"</span></div>
<div class="r" style="top:532px"><span class="ad">00000000004078F1</span><span class="ds">lea rdx,qword ptr ds:[409005]</span><span class="st">"<i class="cj">缓</i><i class="cj">冲</i><i class="cj">区</i><i class="cj">溢</i><i class="cj">出</i><i class="cj">测</i><i class="cj">试</i>\n"</span></div>
<div class="r" style="top:543px"><span class="ad">0000000000407907</span><span class="ds">lea rcx,qword ptr ds:[409015]</span><span class="st">"buf: %08x cookie: %08x\n"</span></div>
<div class="r" style="top:554px"><span class="ad">0000000000407913</span><span class="ds">lea rcx,qword ptr ds:[40902D]</span><span class="st">"<i class="cj">两</i><i class="cj">变</i><i class="cj">量</i><i class="cj">内</i><i class="cj">存</i><i class="cj">地</i><i class="cj">址</i><i class="cj">之</i><i class="cj">差</i>=%d\n"</span></div>
<div class="r" style="top:565px"><span class="ad">000000000040793D</span><span class="ds">lea rcx,qword ptr ds:[409044]</span><span class="st">"<i class="cj">缓</i><i class="cj">冲</i><i class="cj">区</i><i class="cj">溢</i><i class="cj">出</i><i class="cj">成</i><i class="cj">功</i><i class="cj">！</i>\n"</span></div>
<div class="r" style="top:576px"><span class="ad">0000000000407950</span><span class="ds">lea rcx,qword ptr ds:[40905B]</span><span class="st">" lower  sauna doneT llreason"</span></div>
<div class="vs" style="left:118px"></div>
<div class="vs" style="left:826px"></div>
<div id="wm" class="a">www.anquanclub.cn</div>
</body></html>
